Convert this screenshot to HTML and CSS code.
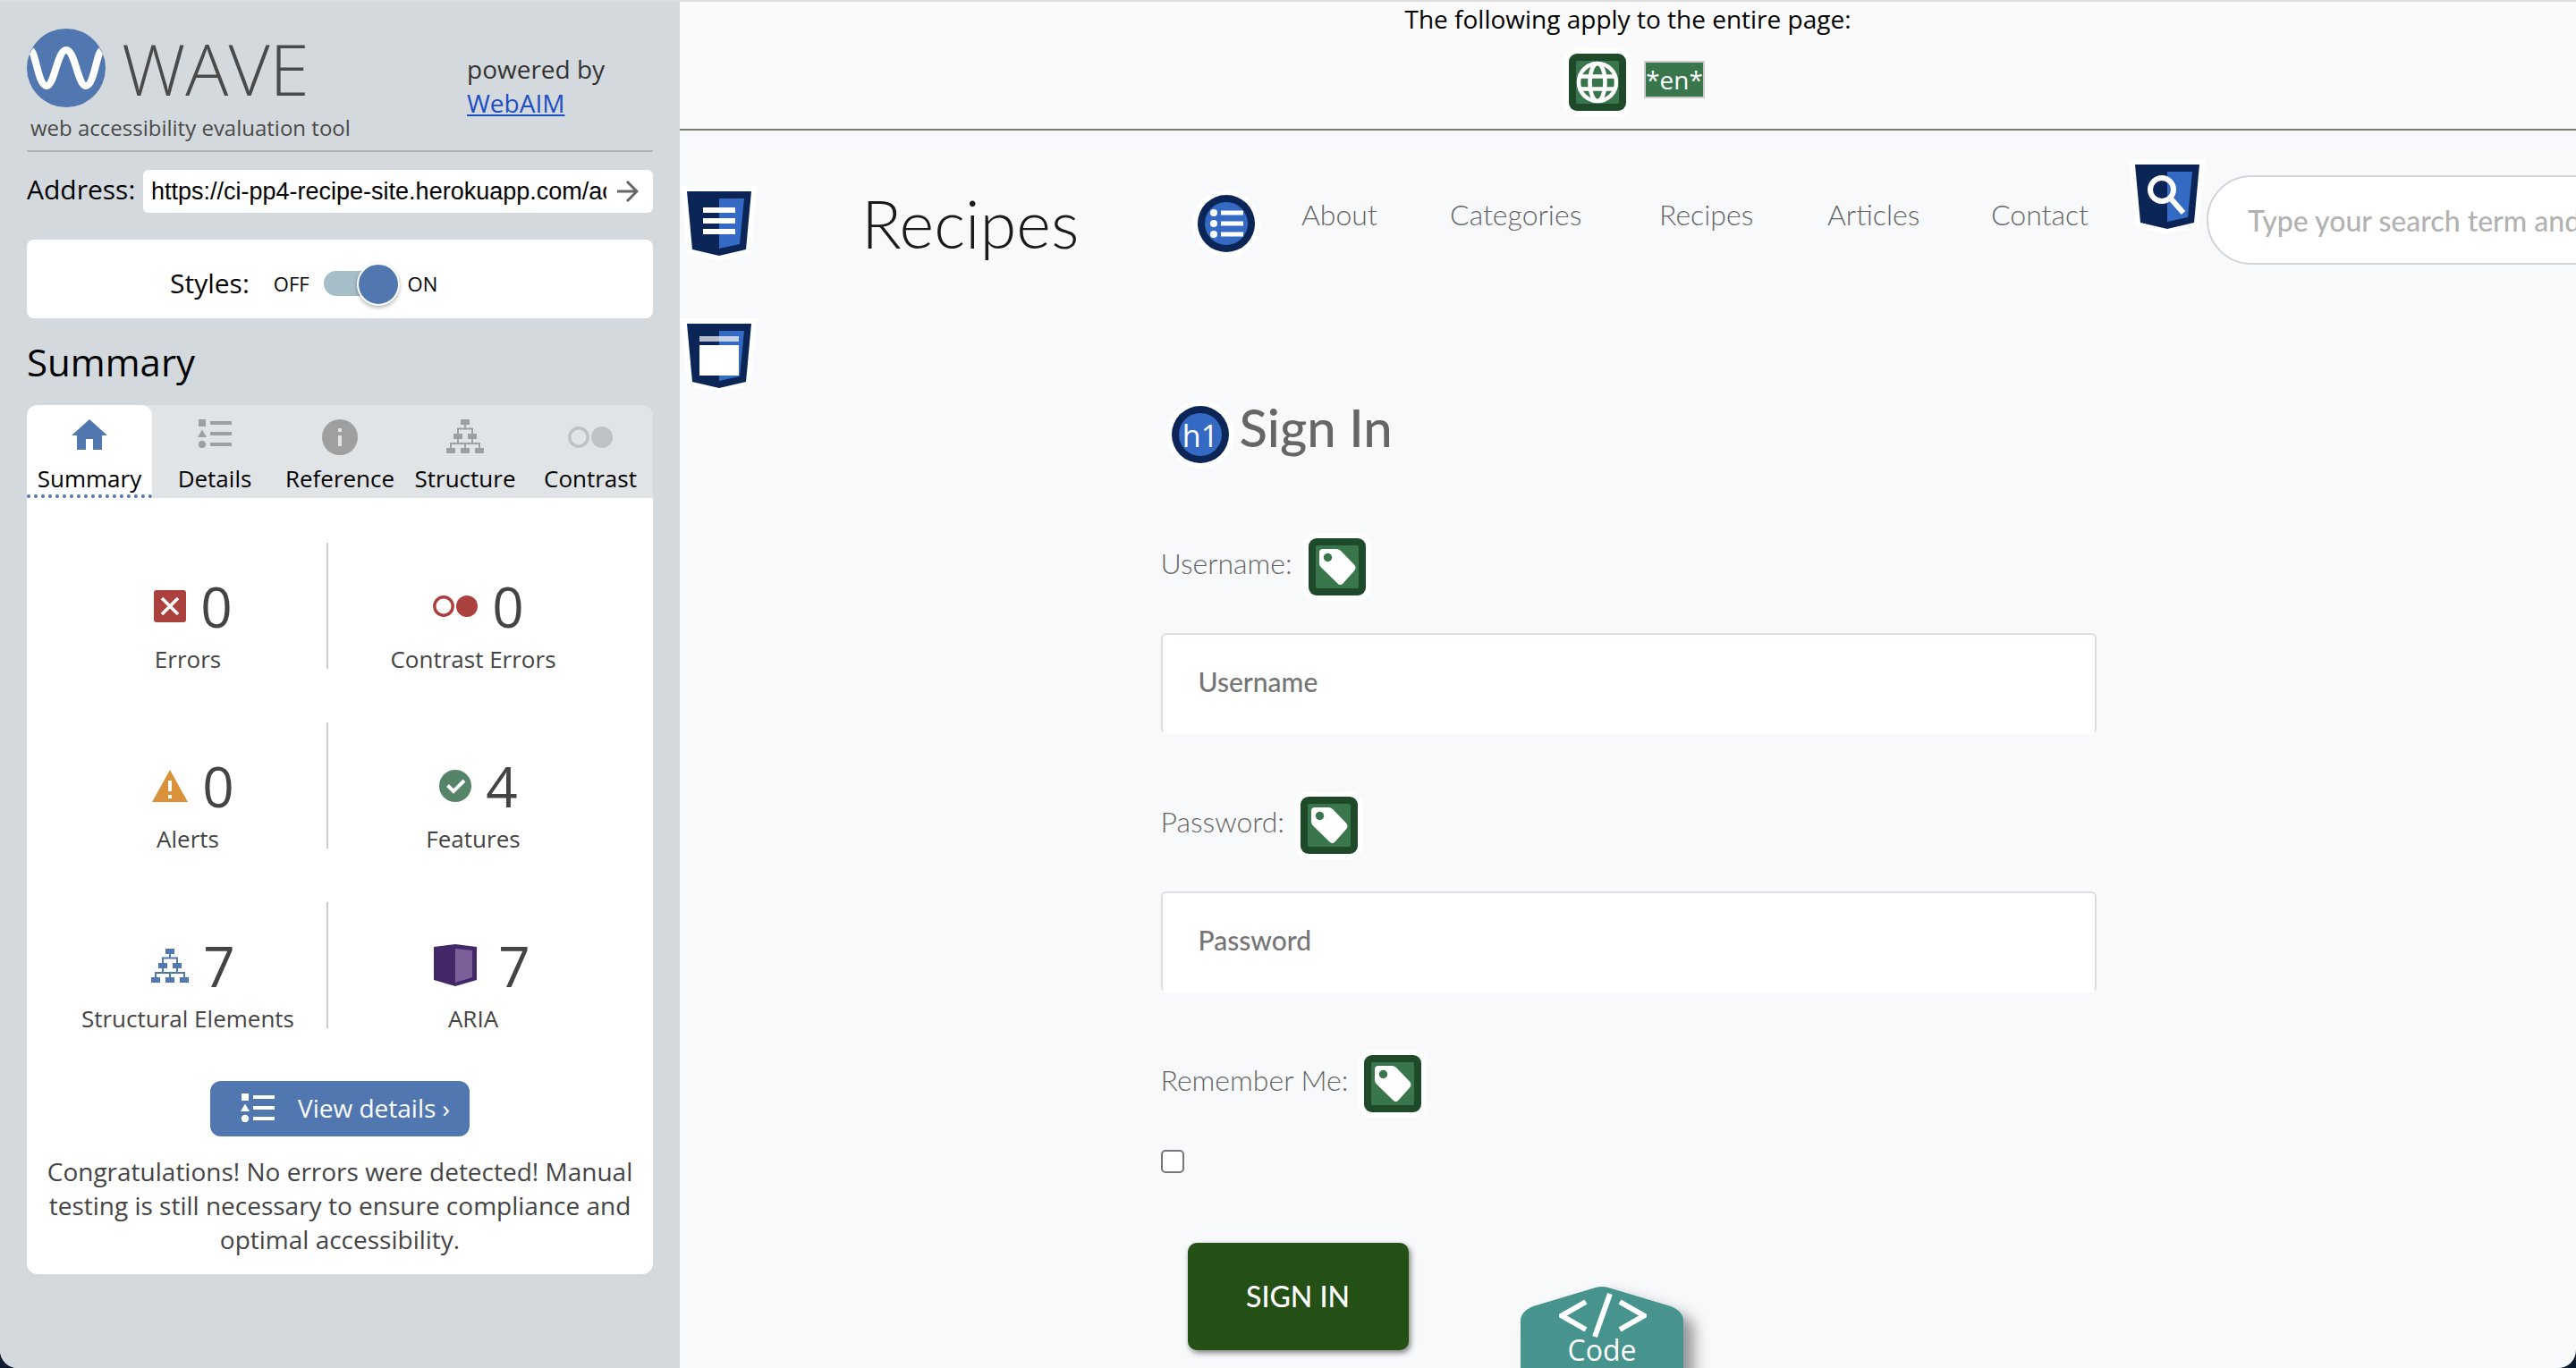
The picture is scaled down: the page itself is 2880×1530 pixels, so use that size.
FILE: index.html
```html
<!DOCTYPE html>
<html lang="en">
<head>
<meta charset="utf-8">
<title>WAVE - Recipes Sign In</title>
<link rel="stylesheet" href="styles.css">
</head>
<body>
<svg class="sprite" aria-hidden="true">
  <symbol id="list" viewBox="0 0 38 32">
    <path d="M1 0h8v8H1zM14 2h24v4H14zM14 14h24v4H14zM14 26h24v4H14zM5 11.500l5 8.500H0z"/>
    <circle cx="5" cy="28" r="4.200"/>
  </symbol>
  <symbol id="tree" viewBox="0 0 42 38">
    <path d="M16 0h10v6h-10zM8 16h10v6H8zM24 16h10v6H24zM0 32h10v6H0zM16 32h10v6H16zM32 32h10v6H32z"/>
    <path d="M21 5v6M13 17v-6.500h16V17M13 21v6M29 21v6M5 33v-6h32v6M21 27v6" fill="none" stroke="currentColor" stroke-width="2"/>
  </symbol>
  <symbol id="contrast" viewBox="0 0 50 24">
    <circle cx="12" cy="12" r="10.200" fill="none" stroke="currentColor" stroke-width="3.400"/>
    <circle cx="38" cy="12" r="12"/>
  </symbol>
  <symbol id="shield" viewBox="0 0 86 84">
    <path d="M0 0h86l-8 76-35 8-35-8z" fill="#fff"/>
    <path d="M7 6h72l-6 65-30 7-30-7z" fill="#0b2656"/>
    <path d="M43 14h28l-5 51-23 5z" fill="#346ac4"/>
  </symbol>
  <symbol id="disc" viewBox="0 0 76 76">
    <circle cx="38" cy="38" r="38" fill="#fff"/>
    <circle cx="38" cy="38" r="32" fill="#0b2656"/>
    <circle cx="38" cy="38" r="24" fill="#346ac4"/>
  </symbol>
  <symbol id="plate" viewBox="0 0 76 76">
    <rect width="76" height="76" rx="15" fill="#fff"/>
    <rect x="6" y="6" width="64" height="64" rx="9" fill="#1f4a2a"/>
    <rect x="14" y="14" width="48" height="48" rx="2" fill="#39764b"/>
  </symbol>
  <symbol id="tag" viewBox="0 0 76 76">
    <use href="#plate"/>
    <path d="M22 18h15q3 0 5 2l15 15.500q3 3.500 0 7L44.500 56.500q-3 3-6 0L20.500 39q-2.500-2-2.500-5V22q0-4 4-4z" fill="#fff"/>
    <circle cx="27.500" cy="27.500" r="4.700" fill="#39764b"/>
  </symbol>
</svg>

<div class="app">
  <aside class="sidebar">
    <header class="brand">
      <div class="brand-logo">
        <div class="brand-mark">
          <svg width="88" height="88" viewBox="0 0 88 88">
            <circle cx="44" cy="44" r="44" fill="#5177b1"/>
            <path d="M5 25C10 28 13 64 22 64S34 24 44 24 57 64 66 64 78 28 83 25" fill="none" stroke="#fff" stroke-width="8"/>
          </svg>
          <span class="brand-name">WAVE</span>
        </div>
        <p class="brand-tag">web accessibility evaluation tool</p>
      </div>
      <p class="powered">powered by<br><a href="#">WebAIM</a></p>
    </header>

    <form class="address">
      <label for="url">Address:</label>
      <div class="address-box">
        <input id="url" type="text" value="https://ci-pp4-recipe-site.herokuapp.com/accounts/login/">
        <button type="button" class="go" aria-label="Go">
          <svg width="24" height="24" viewBox="0 0 24 24"><path d="M0 12h22M11 1l11 11-11 11" fill="none" stroke="#666" stroke-width="3"/></svg>
        </button>
      </div>
    </form>

    <div class="styles-card">
      <label for="styles">Styles:</label>
      <span class="state">OFF</span>
      <input id="styles" class="switch" type="checkbox" checked>
      <span class="state">ON</span>
    </div>

    <h2 class="side-title">Summary</h2>
    <nav class="tabs">
      <button class="tab active"><span class="tab-icon"><svg width="40" height="34" viewBox="0 0 40 34"><path d="M20 0l20 18h-6v16h-10V22h-8v12H6V18H0z"/></svg></span>Summary</button>
      <button class="tab"><span class="tab-icon"><svg width="38" height="32"><use href="#list"/></svg></span>Details</button>
      <button class="tab"><span class="tab-icon"><svg width="40" height="40" viewBox="0 0 40 40"><circle cx="20" cy="20" r="20"/><path d="M18 10h4v4h-4zM18 18h4v12h-4z" fill="#e0e4e7"/></svg></span>Reference</button>
      <button class="tab"><span class="tab-icon"><svg width="42" height="38"><use href="#tree"/></svg></span>Structure</button>
      <button class="tab faded"><span class="tab-icon"><svg width="50" height="40" viewBox="0 0 50 40"><use href="#contrast" y="8" width="50" height="24"/></svg></span>Contrast</button>
    </nav>
    <section class="panel">
      <ul class="stats">
        <li class="stat"><div class="stat-top"><svg width="36" height="36" viewBox="0 0 36 36"><rect width="36" height="36" rx="3" fill="#aa413e"/><path d="M9 9l18 18M27 9L9 27" stroke="#fff" stroke-width="3.600"/></svg>0</div>Errors</li>
        <li class="stat"><div class="stat-top red"><svg width="50" height="24"><use href="#contrast"/></svg><b>0</b></div>Contrast Errors</li>
        <li class="stat"><div class="stat-top"><svg width="40" height="36" viewBox="0 0 40 36"><path d="M20 0l20 36H0z" fill="#d9923a"/><path d="M18 12h4v12h-4zM18 28h4v4h-4z" fill="#fff"/></svg>0</div>Alerts</li>
        <li class="stat"><div class="stat-top"><svg width="36" height="36" viewBox="0 0 36 36"><circle cx="18" cy="18" r="18" fill="#558469"/><path d="M9.500 17.500l6.500 6.500L28 12" fill="none" stroke="#fff" stroke-width="4"/></svg>4</div>Features</li>
        <li class="stat"><div class="stat-top blue"><svg width="42" height="38"><use href="#tree"/></svg><b>7</b></div>Structural Elements</li>
        <li class="stat"><div class="stat-top wide"><svg width="48" height="48" viewBox="0 0 48 48"><path d="M0 3l24-3 24 3v37l-24 7L0 40z" fill="#432868"/><path d="M24 5l19 2v30l-19 6z" fill="#7b5f99"/></svg>7</div>ARIA</li>
      </ul>
      <button class="view-details"><svg width="38" height="32"><use href="#list"/></svg>View details ›</button>
      <p class="congrats">Congratulations! No errors were detected! Manual testing is still necessary to ensure compliance and optimal accessibility.</p>
    </section>
  </aside>

  <div class="page">
    <div class="page-bar">
      <p>The following apply to the entire page:</p>
      <div class="page-flags">
        <svg width="76" height="76" viewBox="0 0 76 76"><use href="#plate"/><g fill="none" stroke="#fff" stroke-width="4.500"><circle cx="38" cy="38" r="21"/><ellipse cx="38" cy="38" rx="8.500" ry="21"/><path d="M18 31.500h40M18 45.500h40"/></g></svg>
        <span class="lang">*en*</span>
      </div>
    </div>

    <header class="site-header">
      <svg class="mark-nav" width="86" height="84" viewBox="0 0 86 84"><use href="#shield"/><path d="M25 24h36v6H25zM25 36h36v6H25zM25 48h36v6H25z" fill="#fff"/></svg>
      <a class="site-name" href="#">Recipes</a>
      <svg class="mark-list" width="76" height="76" viewBox="0 0 76 76"><use href="#disc"/><g fill="#fff"><circle cx="24" cy="26" r="4"/><circle cx="24" cy="38" r="4"/><circle cx="24" cy="50" r="4"/><path d="M32 23.500h25v5H32zM32 35.500h25v5H32zM32 47.500h25v5H32z"/></g></svg>
      <nav class="site-nav">
        <a href="#">About</a><a href="#">Categories</a><a href="#">Recipes</a><a href="#">Articles</a><a href="#">Contact</a>
      </nav>
      <svg class="mark-search" width="86" height="84" viewBox="0 0 86 84"><use href="#shield"/><g fill="none" stroke="#fff"><circle cx="37" cy="34" r="13" stroke-width="6"/><path d="M46 43l15 17" stroke-width="6"/></g></svg>
      <input class="search" type="search" aria-label="Search" placeholder="Type your search term and press enter">
    </header>

    <main class="site-main">
      <svg width="86" height="84" viewBox="0 0 86 84"><use href="#shield"/><path d="M21 20h44v6H21z" fill="#fff" opacity=".7"/><path d="M21 30h44v34H21z" fill="#fff"/></svg>
      <form class="login">
        <h1 class="login-title"><svg width="76" height="76" viewBox="0 0 76 76"><use href="#disc"/><text x="38" y="52" text-anchor="middle" class="badge-text">h1</text></svg>Sign In</h1>
        <div class="field-label"><label for="user">Username:</label><svg width="76" height="76"><use href="#tag"/></svg></div>
        <input class="field" id="user" type="text" placeholder="Username">
        <div class="field-label"><label for="pass">Password:</label><svg width="76" height="76"><use href="#tag"/></svg></div>
        <input class="field" id="pass" type="password" placeholder="Password">
        <div class="field-label"><label for="remember">Remember Me:</label><svg width="76" height="76"><use href="#tag"/></svg></div>
        <input class="remember" id="remember" type="checkbox">
        <button class="submit" type="button">SIGN IN</button>
      </form>
    </main>

    <button class="code-tab" type="button">
      <svg class="code-shape" width="182" height="110" viewBox="0 0 182 110"><path d="M0 110V38Q0 28 14 22L84 1q7-2 14 0l70 21q14 6 14 16v72z" fill="#46948d"/></svg>
      <svg class="code-icon" width="98" height="50" viewBox="0 0 98 50"><path d="M30 10L3 25.500 30 41M68 10l27 15.500L68 41M57 1L40 49" fill="none" stroke="#fff" stroke-width="6"/></svg>
      <span class="code-text">Code</span>
    </button>
  </div>
</div>
</body>
</html>
```
FILE: styles.css
```css
* { box-sizing: border-box; }
body { margin: 0; background: #0b1a2e; font-family: "Open Sans", "Noto Sans", sans-serif; font-size: 28px; line-height: 38px; color: #000; }
p, h1, h2, ul { margin: 0; padding: 0; font-weight: 400; }
button, input { font: inherit; color: inherit; border: 0; padding: 0; background: none; }
b { font-weight: 400; }
svg { display: block; flex: none; fill: currentColor; }
.sprite { position: absolute; width: 0; height: 0; }

.app { display: flex; height: 100vh; overflow: hidden; border-top: 2px solid #ddd; border-radius: 0 0 20px 20px; background: #f8f9fb; }

/* Sidebar */
.sidebar { flex: none; width: 760px; padding: 30px 30px 0; background: #d4d9dd; }
.brand { display: flex; justify-content: space-between; height: 138px; border-bottom: 2px solid #b0b5b8; }
.brand-mark { display: flex; align-items: center; gap: 18px; height: 88px; color: #4a4a4a; }
.brand-name { font-size: 80px; line-height: 88px; font-weight: 300; }
.brand-tag { padding: 5px 0 0 4px; font-size: 24px; line-height: 36px; color: #4a4a4a; }
.powered { width: 208px; padding-top: 26px; color: #333; }
.powered a { color: #1d4fc4; }

.address { display: flex; justify-content: space-between; align-items: center; margin-top: 20px; height: 48px; }
.address label { padding-bottom: 4px; font-size: 30px; }
.address-box { display: flex; align-items: center; width: 570px; height: 48px; padding: 0 16px 0 9px; border-radius: 6px; background: #fff; }
.address-box input { flex: 1; min-width: 0; height: 40px; margin-right: 12px; font-family: "Liberation Sans", Arial, sans-serif; font-size: 27px; outline: 0; }

.styles-card { display: flex; align-items: center; height: 88px; margin-top: 30px; padding: 10px 0 0 160px; border-radius: 8px; background: #fff; font-size: 30px; }
.state { font-size: 22px; }
.styles-card label { margin-right: 27px; }
.switch { position: relative; appearance: none; width: 85px; height: 28px; margin: 0 9px 0 16px; border-radius: 14px; background: #a6bec8; }
.switch::after { content: ""; position: absolute; right: 0; top: -9px; width: 44px; height: 44px; border: 2px solid #fff; border-radius: 50%; background: #5177b1; box-shadow: 0 2px 4px rgba(0,0,0,.3); }

.side-title { margin: 19px 0 18px; font-size: 42px; line-height: 60px; }
.tabs { display: grid; grid-template-columns: repeat(5, 1fr); height: 104px; border-radius: 12px 12px 0 0; background: #e0e4e7; }
.tab { display: flex; flex-direction: column; align-items: center; padding-top: 16px; border-bottom: 4px dotted transparent; font-size: 26px; line-height: 36px; }
.tab.active { border-radius: 12px 12px 0 0; border-bottom-color: #5177b1; background: #fff; }
.tab-icon { height: 48px; color: #9d9fa0; }
.active .tab-icon { color: #5177b1; }
.faded .tab-icon { color: #bfc2c5; }

.panel { display: flex; flex-direction: column; align-items: center; padding: 50px 20px 20px; border-radius: 0 0 12px 12px; background: #fff; color: #444; }
.stats { display: grid; grid-template-columns: 312px 324px; row-gap: 60px; padding-right: 14px; list-style: none; font-size: 26px; line-height: 36px; }
.stat { height: 141px; padding-top: 38px; text-align: center; }
.stat:nth-child(odd) { border-right: 2px solid #ccc; }
.stat-top { display: flex; justify-content: center; align-items: center; gap: 16px; height: 66px; margin-bottom: 8px; padding-left: 12px; font-size: 62px; line-height: 66px; }
.stat-top.wide { gap: 24px; padding-left: 20px; }
.stat-top.red { color: #aa413e; }
.stat-top.blue { color: #5177b1; }
.stat-top b { color: #444; }
.view-details { display: flex; align-items: center; justify-content: space-between; width: 290px; height: 62px; margin-top: 59px; padding: 0 22px 2px 34px; border-radius: 12px; background: #5177b1; color: #fff; }
.congrats { margin-top: 20px; text-align: center; }

/* Evaluated page */
.page { position: relative; flex: 1; min-width: 0; overflow: hidden; }
.page-bar { display: flex; flex-direction: column; align-items: center; height: 144px; border-bottom: 2px solid #777c71; background: #fafafa; }
.page-flags { display: flex; align-items: center; gap: 14px; margin-top: 14px; padding-left: 14px; }
.lang { margin-bottom: 6px; border: 2px solid #ccc; background: #39764b; color: #fff; }

.site-header { display: flex; align-items: flex-start; height: 210px; padding: 32px 0 0 1px; font-family: Lato, sans-serif; }
.mark-nav { margin-top: 30px; }
.site-name { flex: none; width: 370px; margin: 27px 0 0 116px; font-size: 74px; line-height: 90px; font-weight: 300; color: #1a1a1a; text-decoration: none; }
.mark-list { margin-top: 34px; }
.site-nav { display: grid; flex: none; grid-template-columns: 166px 234px 188px 183px 154px; margin: 44px 0 0 46px; font-size: 32px; line-height: 36px; font-weight: 300; }
.site-nav a { color: #666; text-decoration: none; }
.search { flex: none; width: 640px; height: 100px; margin: 18px 0 0 1px; padding: 0 44px; border: 2px solid #ced4da; border-radius: 50px; background: #fff; font-size: 32px; font-weight: 500; }
.search::placeholder { color: #b2b2b2; opacity: 1; }

.site-main { padding-left: 1px; font-family: Lato, sans-serif; color: #666; }
.login { width: 1046px; margin: 8px auto 0; }
.login-title { display: flex; gap: 6px; padding-left: 6px; font-size: 58px; line-height: 60px; font-weight: 500; }
.badge-text { font: 34px "Open Sans", sans-serif; fill: #fff; }
.field-label { display: flex; gap: 12px; margin-top: 64px; font-size: 32px; line-height: 36px; font-weight: 300; }
.field-label label { padding-top: 16px; }
.login-title + .field-label { margin-top: 72px; }
.field { display: block; width: 100%; height: 113px; margin-top: 36px; padding: 0 40px 6px; border: 2px solid #ddd; border-bottom-color: #fff; border-radius: 6px; background: #fff; font-size: 30px; font-weight: 500; }
.field::placeholder { color: #757575; opacity: 1; }
.remember { appearance: none; display: block; width: 26px; height: 26px; margin: 36px 0 0; border: 2px solid #767676; border-radius: 5px; background: #fff; }
.submit { width: 247px; height: 120px; margin: 78px 0 0 30px; border-radius: 10px; background: #255015; box-shadow: 2px 3px 6px rgba(0,0,0,.5); color: #fff; font-size: 32px; font-weight: 500; }

.code-tab { position: absolute; left: 50%; bottom: 0; width: 182px; height: 91px; margin-left: -120px; color: #fff; }
.code-shape { position: absolute; left: 0; top: 0; filter: drop-shadow(12px 10px 8px rgba(0,0,0,.4)); }
.code-icon { position: absolute; left: 43px; top: 7px; }
.code-text { position: absolute; left: 0; width: 100%; top: 52px; font-size: 32px; line-height: 38px; }
```
